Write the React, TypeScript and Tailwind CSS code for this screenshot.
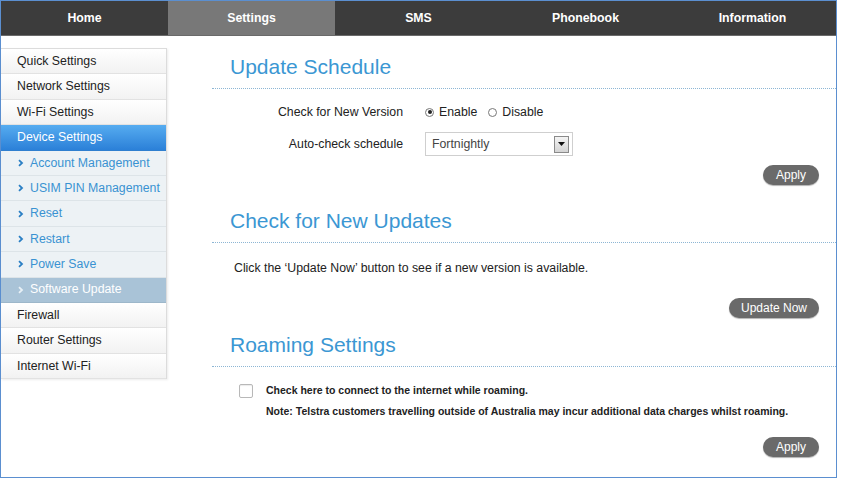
import React from 'react';

const tabs = ['Home', 'Settings', 'SMS', 'Phonebook', 'Information'];

type Item = { label: string; kind: 'top' | 'active' | 'sub' | 'current' };

const menu: Item[] = [
  { label: 'Quick Settings', kind: 'top' },
  { label: 'Network Settings', kind: 'top' },
  { label: 'Wi-Fi Settings', kind: 'top' },
  { label: 'Device Settings', kind: 'active' },
  { label: 'Account Management', kind: 'sub' },
  { label: 'USIM PIN Management', kind: 'sub' },
  { label: 'Reset', kind: 'sub' },
  { label: 'Restart', kind: 'sub' },
  { label: 'Power Save', kind: 'sub' },
  { label: 'Software Update', kind: 'current' },
  { label: 'Firewall', kind: 'top' },
  { label: 'Router Settings', kind: 'top' },
  { label: 'Internet Wi-Fi', kind: 'top' },
];

function Chevron({ color }: { color: string }) {
  return (
    <svg width="12" height="8" viewBox="0 0 12 8" className="shrink-0">
      <path d="M1 1.2l3 2.8-3 2.8" fill="none" stroke={color} strokeWidth="1.8" />
    </svg>
  );
}

function SideItem({ item }: { item: Item }) {
  if (item.kind === 'active') {
    return (
      <div className="h-[25.4px] flex items-center pl-[16px] text-white bg-gradient-to-b from-[#56acf0] to-[#2b80d8] border-b border-[#2f7fcf] whitespace-nowrap">
        {item.label}
      </div>
    );
  }
  if (item.kind === 'sub' || item.kind === 'current') {
    const cur = item.kind === 'current';
    return (
      <div
        className={
          cur
            ? 'h-[25.4px] flex items-center pl-[17px] bg-[#a9c3d7] text-white border-b border-[#9db7ca] whitespace-nowrap'
            : 'h-[25.4px] flex items-center pl-[17px] bg-[#edf2f5] text-[#3a92d2] border-b border-[#dde4e8] whitespace-nowrap'
        }
      >
        <Chevron color={cur ? '#e8f0f6' : '#2a7fc4'} />
        {item.label}
      </div>
    );
  }
  return (
    <div className="h-[25.4px] flex items-center pl-[16px] text-[#222] bg-gradient-to-b from-[#ffffff] to-[#f2f2f2] border-b border-[#e2e2e2] whitespace-nowrap">
      {item.label}
    </div>
  );
}

function Heading({ children, mt }: { children: React.ReactNode; mt: string }) {
  return (
    <div className={`${mt} pb-[9px] border-b border-dotted border-[#8db6d4]`}>
      <h2 className="pl-[18px] text-[21px] leading-[24px] text-[#3b97d3]">{children}</h2>
    </div>
  );
}

function Pill({ label, w }: { label: string; w: string }) {
  return (
    <button className={`${w} h-[20px] rounded-full bg-[#6a6a6a] text-white text-[12px] leading-[20px] text-center shadow-[0_1px_1px_rgba(0,0,0,0.3)]`}>
      {label}
    </button>
  );
}

function Radio({ checked }: { checked?: boolean }) {
  return (
    <span className="w-[9px] h-[9px] rounded-full border border-[#777] bg-white flex items-center justify-center">
      {checked && <span className="w-[4px] h-[4px] rounded-full bg-[#222]" />}
    </span>
  );
}

export default function App() {
  return (
    <div className="w-[847px] h-[487px] bg-white" style={{ fontFamily: '"Liberation Sans", Arial, sans-serif' }}>
      <div className="w-[837px] h-[478px] border border-[#5b8fd0] flex flex-col">
        {/* top navigation */}
        <div className="h-[35px] grid grid-cols-5 bg-[#3c3c3c] border-b border-[#6a6a6a]">
          {tabs.map((t) => (
            <div
              key={t}
              className={
                t === 'Settings'
                  ? 'flex items-center justify-center bg-[#787878] text-white font-bold text-[12.3px]'
                  : 'flex items-center justify-center text-white font-bold text-[12.3px]'
              }
            >
              {t}
            </div>
          ))}
        </div>

        <div className="flex flex-1">
          {/* sidebar */}
          <div className="w-[166px] pt-[12px] shrink-0">
            <div className="border-t border-r border-[#dcdcdc] text-[12.3px] shadow-[1px_1px_2px_rgba(0,0,0,0.08)]">
              {menu.map((m) => (
                <SideItem key={m.label} item={m} />
              ))}
            </div>
          </div>

          {/* main */}
          <div className="flex-1 ml-[45px] pt-[19px] flex flex-col text-[12.3px] text-[#222]">
            <Heading mt="mt-0">Update Schedule</Heading>

            <div className="mt-[13px] flex items-center h-[20px]">
              <div className="w-[191px] text-right">Check for New Version</div>
              <div className="ml-[22px] flex items-center">
                <Radio checked />
                <span className="ml-[5px]">Enable</span>
                <span className="ml-[11px]">
                  <Radio />
                </span>
                <span className="ml-[5px]">Disable</span>
              </div>
            </div>

            <div className="mt-[10px] flex items-center h-[24px]">
              <div className="w-[191px] text-right">Auto-check schedule</div>
              <div className="ml-[22px] w-[148px] h-[24px] border border-[#cfcfcf] flex items-center justify-between pl-[6px] pr-[3px] text-[#444]">
                <span>Fortnightly</span>
                <span className="w-[15px] h-[17px] border border-[#8a8a8a] bg-gradient-to-b from-[#f4f4f4] to-[#d4d4d4] flex items-center justify-center">
                  <svg width="7" height="4" viewBox="0 0 7 4">
                    <path d="M0 0h7L3.5 4z" fill="#111" />
                  </svg>
                </span>
              </div>
            </div>

            <div className="mt-[9px] flex justify-end pr-[17px]">
              <Pill label="Apply" w="w-[56px]" />
            </div>

            <Heading mt="mt-[24px]">Check for New Updates</Heading>

            <div className="mt-[15px] h-[20px] flex items-center pl-[22px]">
              Click the ‘Update Now’ button to see if a new version is available.
            </div>

            <div className="mt-[20px] flex justify-end pr-[17px]">
              <Pill label="Update Now" w="w-[90px]" />
            </div>

            <Heading mt="mt-[15px]">Roaming Settings</Heading>

            <div className="mt-[16px] h-[16px] flex items-center pl-[27px]">
              <span className="w-[14px] h-[14px] border border-[#b8b8b8] rounded-[2px] bg-white shadow-[inset_0_1px_1px_rgba(0,0,0,0.08)]" />
              <span className="ml-[13px] text-[10.5px] font-bold">Check here to connect to the internet while roaming.</span>
            </div>
            <div className="mt-[5px] h-[16px] flex items-center pl-[54px] text-[10.5px] font-bold">
              Note: Telstra customers travelling outside of Australia may incur additional data charges whilst roaming.
            </div>

            <div className="mt-[17px] flex justify-end pr-[17px]">
              <Pill label="Apply" w="w-[56px]" />
            </div>
          </div>
        </div>
      </div>
    </div>
  );
}
